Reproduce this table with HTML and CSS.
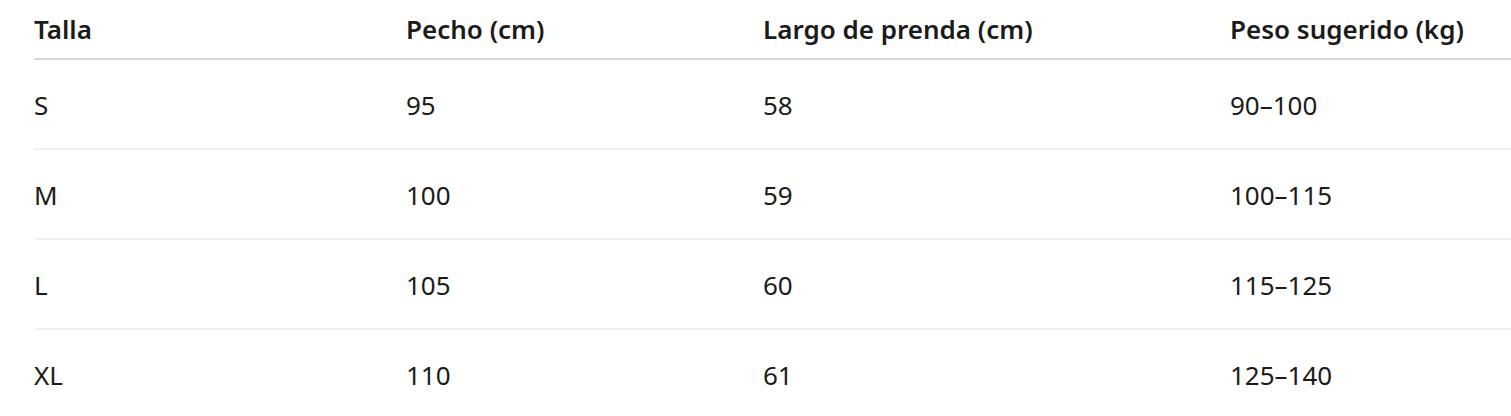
FILE: index.html
```html
<!DOCTYPE html>
<html lang="es">
<head>
<meta charset="utf-8">
<title>Tabla de tallas</title>
<link rel="stylesheet" href="styles.css">
</head>
<body>
<div class="wrap">
  <div class="size-table" role="table">
    <div class="row head" role="row">
      <div class="cell" role="columnheader">Talla</div>
      <div class="cell" role="columnheader">Pecho (cm)</div>
      <div class="cell" role="columnheader">Largo de prenda (cm)</div>
      <div class="cell" role="columnheader">Peso sugerido (kg)</div>
    </div>
    <div class="row" role="row">
      <div class="cell">S</div><div class="cell">95</div><div class="cell">58</div><div class="cell">90–100</div>
    </div>
    <div class="row" role="row">
      <div class="cell">M</div><div class="cell">100</div><div class="cell">59</div><div class="cell">100–115</div>
    </div>
    <div class="row" role="row">
      <div class="cell">L</div><div class="cell">105</div><div class="cell">60</div><div class="cell">115–125</div>
    </div>
    <div class="row" role="row">
      <div class="cell">XL</div><div class="cell">110</div><div class="cell">61</div><div class="cell">125–140</div>
    </div>
  </div>
</div>
</body>
</html>
```

FILE: styles.css
```css
html, body {
  margin: 0;
  padding: 0;
  background: #ffffff;
  overflow: hidden;
}

body {
  font-family: "Noto Sans", "Open Sans", sans-serif;
  font-size: 26px;
  color: #1b1b1b;
}

.wrap {
  padding-left: 34px;
}

.size-table {
  display: flex;
  flex-direction: column;
}

.row {
  display: grid;
  grid-template-columns: 372px 357px 467px 1fr;
  border-bottom: 2px solid #f0f0f0;
}

.row .cell {
  line-height: 36px;
  padding: 27px 0 25px;
  white-space: nowrap;
}

.row.head {
  border-bottom-color: #d9d9d9;
}

.row.head .cell {
  padding: 11px 0;
  font-weight: 600;
}
```
